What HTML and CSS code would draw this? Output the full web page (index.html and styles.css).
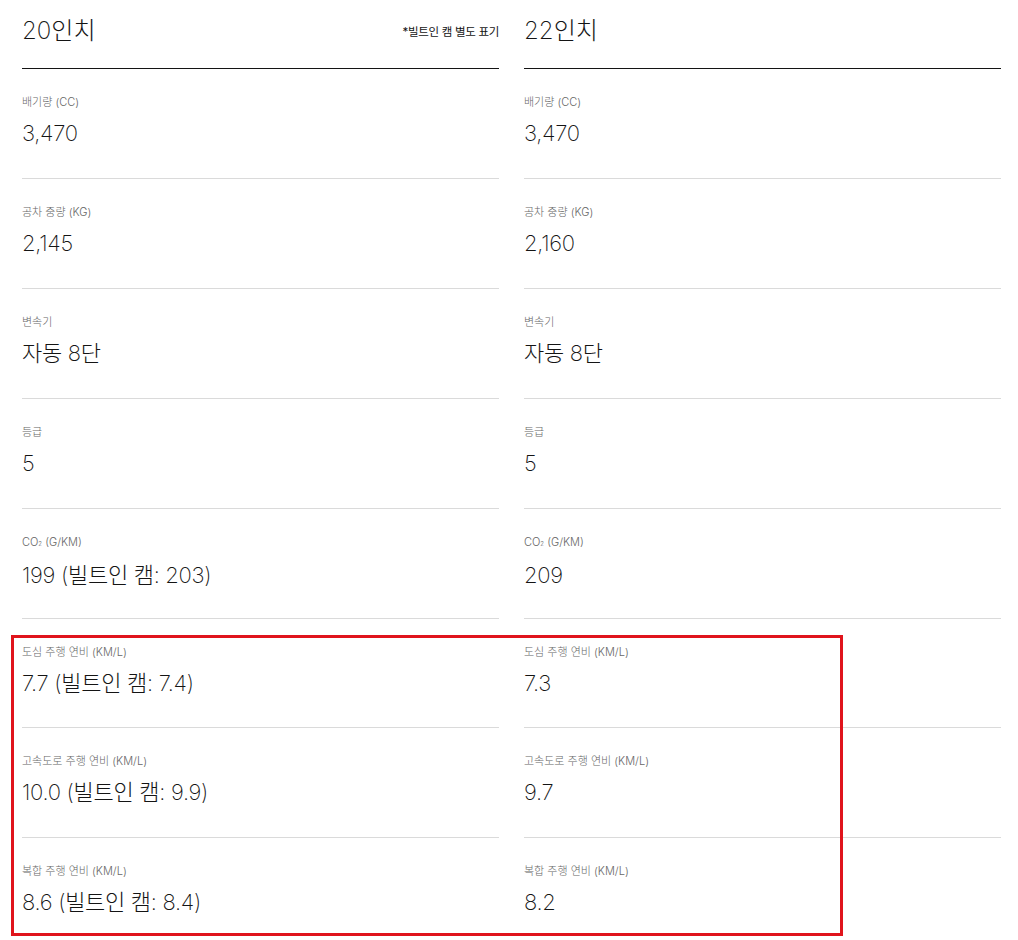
FILE: index.html
```html
<!DOCTYPE html>
<html lang="ko">
<head>
  <meta charset="UTF-8">
  <title>제원 비교</title>
  <link rel="stylesheet" href="styles.css">
</head>
<body>

  <div class="spec-compare">

    <!-- 20 inch -->
    <div class="spec-col">
      <div class="spec-head">
        <h2>20인치</h2>
        <span class="note">*빌트인 캠 별도 표기</span>
      </div>
      <div class="spec-row">
        <div class="label">배기량 (CC)</div>
        <div class="value">3,470</div>
      </div>
      <div class="spec-row">
        <div class="label">공차 중량 (KG)</div>
        <div class="value">2,145</div>
      </div>
      <div class="spec-row">
        <div class="label">변속기</div>
        <div class="value">자동 8단</div>
      </div>
      <div class="spec-row">
        <div class="label">등급</div>
        <div class="value">5</div>
      </div>
      <div class="spec-row">
        <div class="label">CO<sub>2</sub> (G/KM)</div>
        <div class="value">199 (빌트인 캠: 203)</div>
      </div>
      <div class="spec-row">
        <div class="label">도심 주행 연비 (KM/L)</div>
        <div class="value">7.7 (빌트인 캠: 7.4)</div>
      </div>
      <div class="spec-row">
        <div class="label">고속도로 주행 연비 (KM/L)</div>
        <div class="value">10.0 (빌트인 캠: 9.9)</div>
      </div>
      <div class="spec-row">
        <div class="label">복합 주행 연비 (KM/L)</div>
        <div class="value">8.6 (빌트인 캠: 8.4)</div>
      </div>
    </div>

    <!-- 22 inch -->
    <div class="spec-col">
      <div class="spec-head">
        <h2>22인치</h2>
      </div>
      <div class="spec-row">
        <div class="label">배기량 (CC)</div>
        <div class="value">3,470</div>
      </div>
      <div class="spec-row">
        <div class="label">공차 중량 (KG)</div>
        <div class="value">2,160</div>
      </div>
      <div class="spec-row">
        <div class="label">변속기</div>
        <div class="value">자동 8단</div>
      </div>
      <div class="spec-row">
        <div class="label">등급</div>
        <div class="value">5</div>
      </div>
      <div class="spec-row">
        <div class="label">CO<sub>2</sub> (G/KM)</div>
        <div class="value">209</div>
      </div>
      <div class="spec-row">
        <div class="label">도심 주행 연비 (KM/L)</div>
        <div class="value">7.3</div>
      </div>
      <div class="spec-row">
        <div class="label">고속도로 주행 연비 (KM/L)</div>
        <div class="value">9.7</div>
      </div>
      <div class="spec-row">
        <div class="label">복합 주행 연비 (KM/L)</div>
        <div class="value">8.2</div>
      </div>
    </div>

  </div>

  <!-- highlight box -->
  <div class="highlight"></div>

</body>
</html>
```

FILE: styles.css
```css
* {
  box-sizing: border-box;
  margin: 0;
  padding: 0;
}

body {
  font-family: Inter, "Noto Sans CJK KR", sans-serif;
  font-weight: 200;
  background: #ffffff;
  color: #141414;
  padding: 0 17px 0 22px;
  position: relative;
  overflow: hidden;
  height: 940px;
}

.spec-compare {
  display: grid;
  grid-template-columns: 1fr 1fr;
  gap: 25px;
}

.spec-head {
  height: 69px;
  border-bottom: 1px solid #141414;
  display: flex;
  justify-content: space-between;
  align-items: flex-start;
  padding-top: 15px;
}

.spec-head h2 {
  font-size: 24px;
  font-weight: 200;
  line-height: 32px;
}

.spec-head .note {
  font-size: 11.5px;
  font-weight: 400;
  line-height: 16px;
  margin-top: 9px;
  letter-spacing: -0.3px;
}

.spec-row {
  height: 110px;
  border-bottom: 1px solid #dadada;
  padding-top: 25px;
}

.spec-row:nth-child(7) {
  height: 109px;
}

.spec-row .label {
  font-size: 11px;
  line-height: 16px;
  font-weight: 300;
  color: #666666;
}

.spec-row .label sub {
  font-size: 6px;
  vertical-align: baseline;
}

.spec-row .value {
  font-size: 22px;
  line-height: 30px;
  margin-top: 8px;
  letter-spacing: -0.3px;
}

.highlight {
  position: absolute;
  left: 11px;
  top: 635px;
  width: 832px;
  height: 301px;
  border: 3px solid #e0141c;
}
```
